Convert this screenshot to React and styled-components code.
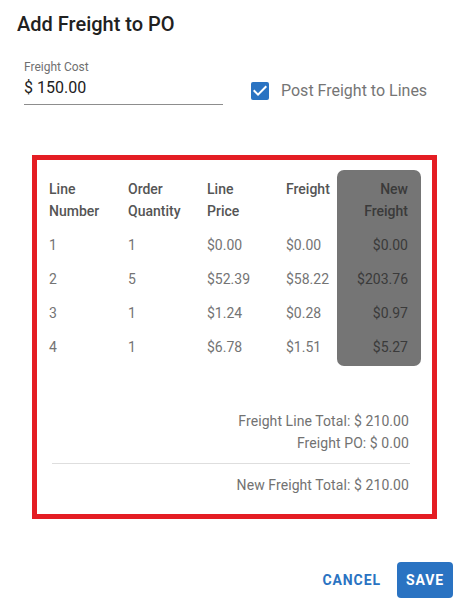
import React from "react";
import styled, { createGlobalStyle } from "styled-components";

const Global = createGlobalStyle`
  html, body { margin: 0; padding: 0; background: #fff; }
  body { font-family: Roboto, "Noto Sans", Arial, sans-serif; -webkit-font-smoothing: antialiased; }
  * { box-sizing: border-box; }
`;

const Dialog = styled.div`
  width: 461px;
  height: 600px;
  background: #fff;
  display: flex;
  flex-direction: column;
  overflow: hidden;
`;

const Title = styled.h2`
  margin: 12px 0 0 17px;
  font-size: 20px;
  line-height: 24px;
  font-weight: 500;
  color: #212121;
`;

const FormRow = styled.div`
  display: flex;
  align-items: flex-start;
  margin: 23px 0 0 24px;
  gap: 25px;
`;

const Field = styled.label`
  display: flex;
  flex-direction: column;
  width: 199px;
  border-bottom: 1px solid #8d8d8d;
  padding-bottom: 4px;
`;

const FieldLabel = styled.span`
  font-size: 12px;
  line-height: 16px;
  color: #707070;
  height: 17px;
`;

const FieldValue = styled.span`
  font-size: 16px;
  line-height: 24px;
  color: #212121;
`;

const CheckRow = styled.div`
  display: flex;
  align-items: center;
  gap: 9px;
  margin-top: 20px;
`;

const CheckIcon = styled.svg`
  display: block;
  width: 24px;
  height: 24px;
`;

const CheckLabel = styled.span`
  font-size: 16px;
  line-height: 24px;
  color: #757575;
  margin-top: -1px;
`;

const Frame = styled.div`
  margin: 50px 0 0 32px;
  width: 405px;
  height: 364px;
  border: 5px solid #e41d23;
  padding: 10px 10px 0 12px;
  display: flex;
  flex-direction: column;
`;

const Table = styled.div`
  display: flex;
`;

const Column = styled.div`
  width: ${(p) => p.$w}px;
  display: flex;
  flex-direction: column;
  padding-bottom: 2px;
  background: ${(p) => (p.$hl ? "#757575" : "transparent")};
  border-radius: ${(p) => (p.$hl ? "7px" : "0")};
  text-align: ${(p) => (p.$hl ? "right" : "left")};
  padding-right: ${(p) => (p.$hl ? "13px" : "0")};
`;

const HeadCell = styled.div`
  height: 58px;
  padding-top: 8px;
  font-size: 14px;
  line-height: 22px;
  font-weight: 500;
  color: ${(p) => (p.$hl ? "#3a3a3a" : "#555555")};
  white-space: nowrap;
`;

const Cell = styled.div`
  height: 34px;
  font-size: 14px;
  line-height: 34px;
  color: ${(p) => (p.$hl ? "#3a3a3a" : "#747474")};
  white-space: nowrap;
`;

const Summary = styled.div`
  margin: 44px 12px 0 3px;
  display: flex;
  flex-direction: column;
  align-items: flex-end;
`;

const SumLine = styled.div`
  font-size: 14px;
  line-height: 22px;
  color: #727272;
  letter-spacing: 0.08px;
  padding-right: 1px;
`;

const Divider = styled.hr`
  align-self: stretch;
  border: 0;
  border-top: 1px solid #dedede;
  margin: 9px 0 10px 0;
`;

const Actions = styled.div`
  display: flex;
  justify-content: flex-end;
  align-items: center;
  gap: 8px;
  margin: 43px 8px 0 0;
`;

const Button = styled.button`
  height: 36px;
  border: 0;
  border-radius: 4px;
  font-family: Roboto, Arial, sans-serif;
  font-size: 14px;
  font-weight: 700;
  letter-spacing: 0.9px;
  padding: 0 ${(p) => (p.$primary ? "9px" : "8px")};
  background: ${(p) => (p.$primary ? "#2a73c2" : "transparent")};
  color: ${(p) => (p.$primary ? "#fff" : "#2a73c2")};
  cursor: pointer;
`;

const columns = [
  { w: 79, head: ["Line", "Number"], key: "n" },
  { w: 79, head: ["Order", "Quantity"], key: "q" },
  { w: 79, head: ["Line", "Price"], key: "p" },
  { w: 51, head: ["Freight"], key: "f" },
  { w: 84, head: ["New", "Freight"], key: "nf", hl: true },
];

const rows = [
  { n: "1", q: "1", p: "$0.00", f: "$0.00", nf: "$0.00" },
  { n: "2", q: "5", p: "$52.39", f: "$58.22", nf: "$203.76" },
  { n: "3", q: "1", p: "$1.24", f: "$0.28", nf: "$0.97" },
  { n: "4", q: "1", p: "$6.78", f: "$1.51", nf: "$5.27" },
];

export default function App() {
  return (
    <>
      <Global />
      <Dialog>
        <Title>Add Freight to PO</Title>
        <FormRow>
          <Field>
            <FieldLabel>Freight Cost</FieldLabel>
            <FieldValue>$ 150.00</FieldValue>
          </Field>
          <CheckRow>
            <CheckIcon viewBox="0 0 24 24">
              <rect x="3" y="3" width="18" height="18" rx="2" fill="#2a73c2" />
              <path d="M10 17l-5-5 1.41-1.41L10 14.17l7.59-7.59L19 8l-9 9z" fill="#fff" />
            </CheckIcon>
            <CheckLabel>Post Freight to Lines</CheckLabel>
          </CheckRow>
        </FormRow>
        <Frame>
          <Table>
            {columns.map((c) => (
              <Column key={c.key} $w={c.w} $hl={c.hl}>
                <HeadCell $hl={c.hl}>
                  {c.head.map((h, i) => (
                    <div key={i}>{h}</div>
                  ))}
                </HeadCell>
                {rows.map((r, i) => (
                  <Cell key={i} $hl={c.hl}>
                    {r[c.key]}
                  </Cell>
                ))}
              </Column>
            ))}
          </Table>
          <Summary>
            <SumLine>Freight Line Total: $ 210.00</SumLine>
            <SumLine>Freight PO: $ 0.00</SumLine>
            <Divider />
            <SumLine>New Freight Total: $ 210.00</SumLine>
          </Summary>
        </Frame>
        <Actions>
          <Button>CANCEL</Button>
          <Button $primary>SAVE</Button>
        </Actions>
      </Dialog>
    </>
  );
}
